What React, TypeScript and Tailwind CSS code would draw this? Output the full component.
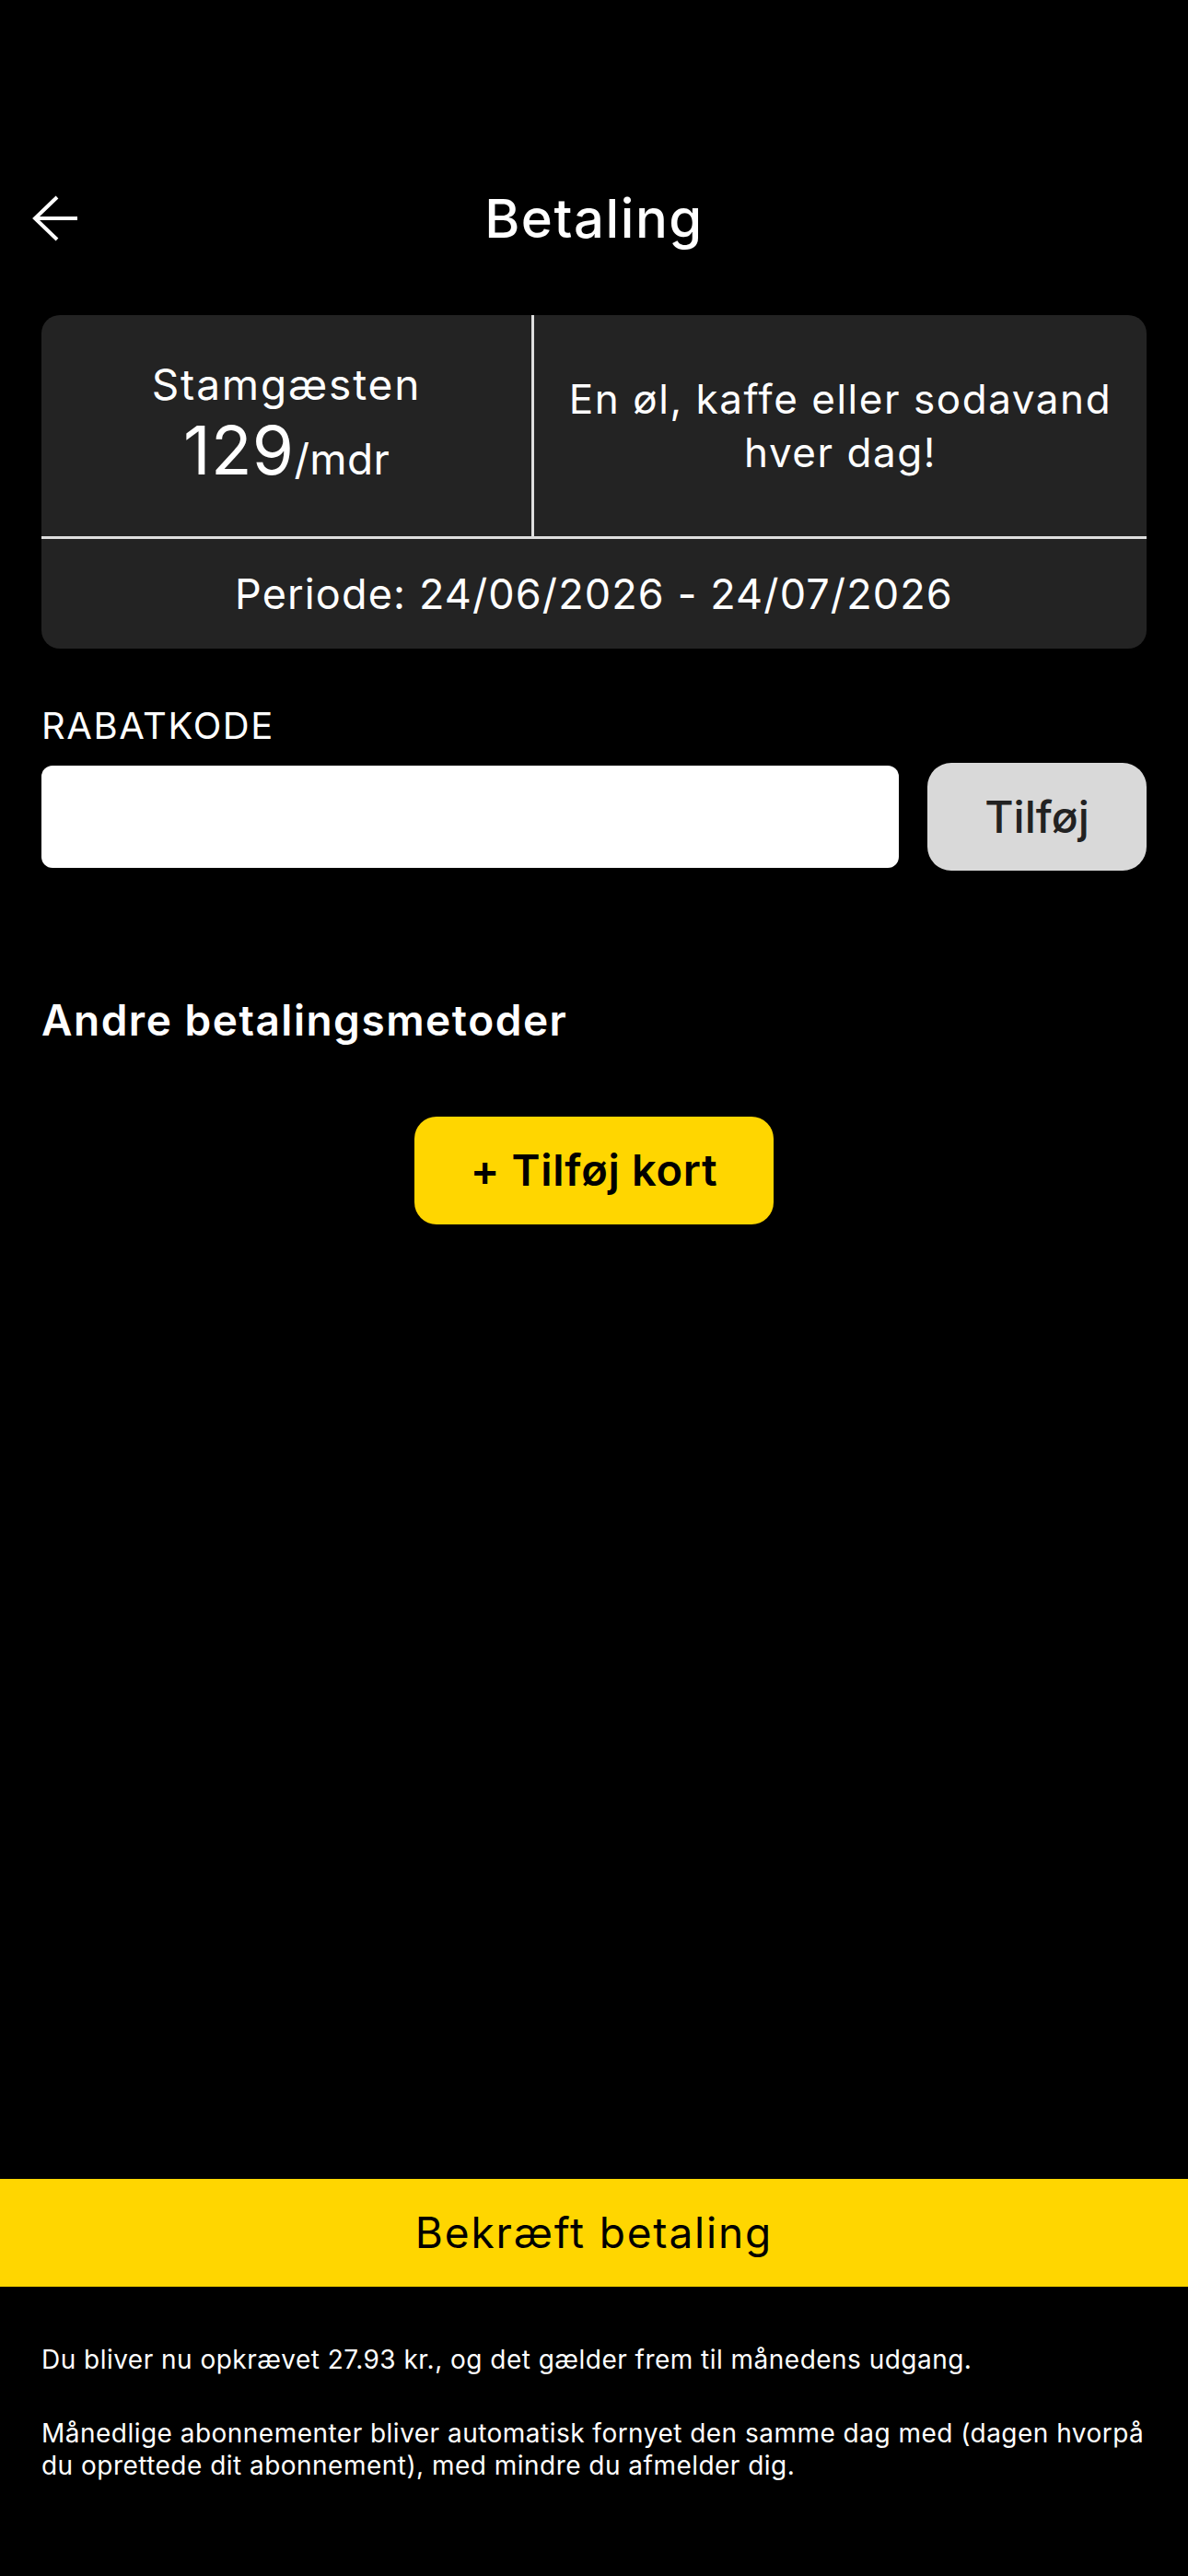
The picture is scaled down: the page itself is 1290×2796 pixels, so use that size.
const font = { fontFamily: 'Inter, "Noto Sans", sans-serif' };

function BackArrow() {
  return (
    <svg width="52" height="52" viewBox="0 0 52 52" fill="none" stroke="currentColor" strokeWidth="4">
      <path d="M4 26H50" />
      <path d="M28 3L4 26L28 49" />
    </svg>
  );
}

function Header() {
  return (
    <div className="grid h-[120px] grid-cols-[1fr_auto_1fr] items-center">
      <button className="justify-self-start pl-[34px] text-white">
        <BackArrow />
      </button>
      <h1 className="text-[58px] font-medium leading-none tracking-[0.027em] text-white">Betaling</h1>
      <div />
    </div>
  );
}

function PlanCard() {
  return (
    <div className="mx-[45px] mt-[45px] overflow-hidden rounded-[20px] bg-[#232323] text-white">
      <div className="grid h-[240px] grid-cols-[532px_3px_1fr]">
        {/* Plan + price */}
        <div className="flex flex-col items-center justify-center pt-[6px]">
          <p className="text-[46px] leading-[56px] tracking-[0.04em]">Stamgæsten</p>
          <p className="flex items-baseline leading-[88px] tracking-[0.02em]">
            <span className="text-[73px]">129</span>
            <span className="text-[46px]">/mdr</span>
          </p>
        </div>
        <div className="bg-[#dedede]" />
        {/* Perk */}
        <div className="flex items-center justify-center px-4 text-center">
          <p className="text-[44px] leading-[58px] tracking-[0.035em]">En øl, kaffe eller sodavand hver dag!</p>
        </div>
      </div>
      <div className="h-[3px] bg-[#dedede]" />
      <div className="flex h-[119px] items-center justify-center">
        <p className="text-[45px] leading-none tracking-[0.025em]">Periode: 24/06/2026 - 24/07/2026</p>
      </div>
    </div>
  );
}

function DiscountCode() {
  return (
    <div className="mx-[45px] mt-[64px]">
      <p className="text-[40px] leading-none tracking-[0.04em] text-white">RABATKODE</p>
      <div className="mt-[20px] flex items-center gap-[31px]">
        <input className="h-[111px] flex-1 rounded-[12px] bg-white px-6 text-[40px] text-black outline-none" />
        <button className="flex h-[117px] w-[238px] items-center justify-center rounded-[26px] bg-[#d9d9d9] text-[48px] font-medium text-[#222]">
          Tilføj
        </button>
      </div>
    </div>
  );
}

function PaymentMethods() {
  return (
    <div className="mx-[45px] mt-[139px]">
      <h2 className="text-[46px] font-semibold leading-none tracking-[0.033em] text-white">
        Andre betalingsmetoder
      </h2>
      <div className="mt-[82px] flex justify-center">
        <button className="flex h-[117px] w-[390px] items-center justify-center rounded-[24px] bg-[#ffd600] text-[47px] font-semibold tracking-[0.015em] text-black">
          + Tilføj kort
        </button>
      </div>
    </div>
  );
}

export default function App() {
  return (
    <div className="flex h-[2796px] flex-col bg-black" style={font}>
      <div className="pt-[177px]">
        <Header />
      </div>
      <PlanCard />
      <DiscountCode />
      <PaymentMethods />

      <div className="mt-auto pb-[102px]">
        <button className="flex h-[117px] w-full items-center justify-center bg-[#ffd600] text-[46px] tracking-[0.04em] text-black">
          Bekræft betaling
        </button>
        <div className="mx-[45px] mt-[62px] space-y-[45px] text-[28px] leading-[35px] tracking-[0.017em] text-white">
          <p>Du bliver nu opkrævet 27.93 kr., og det gælder frem til månedens udgang.</p>
          <p>
            Månedlige abonnementer bliver automatisk fornyet den samme dag med (dagen hvorpå du oprettede dit
            abonnement), med mindre du afmelder dig.
          </p>
        </div>
      </div>
    </div>
  );
}
